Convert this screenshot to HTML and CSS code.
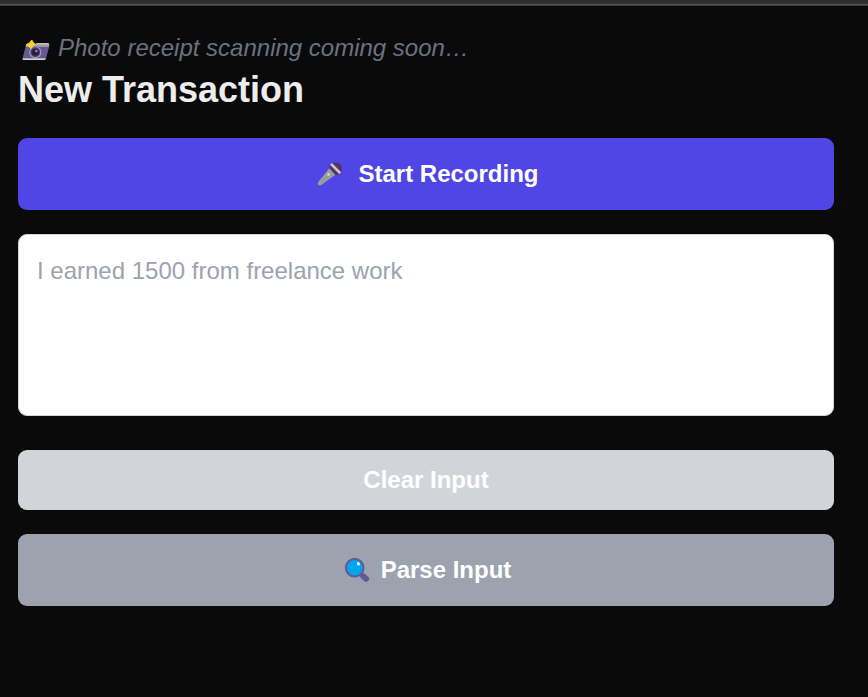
FILE: index.html
```html
<!DOCTYPE html>
<html lang="en">
<head>
<meta charset="utf-8">
<title>New Transaction</title>
<link rel="stylesheet" href="styles.css">
</head>
<body>
<div class="topbar"></div>
<main class="page">
  <p class="notice">
    <svg class="camera" viewBox="0 0 28 22" aria-hidden="true">
      <path d="M4 5h22q1.500 0 1.200 1.500L24 18.500H.5z" fill="#635994"/>
      <path d="M5 4.500h7l3-1.500h10.500q2 0 1.800 2L26.800 7H17q-4-1.500-7 0H3.500z" fill="#9b9b9b"/>
      <path d="M14 4l2-1h9.500q1.600 0 1.600 1.800H14z" fill="#bebebe"/>
      <path d="M.6 18.200h23.500q-.3 1.800-1.800 1.800H1.500Q0 20 .6 18.200z" fill="#d3d3d3"/>
      <circle cx="13.300" cy="12.200" r="6" fill="#aaa3b4"/>
      <circle cx="13.300" cy="12.200" r="4.900" fill="#433b6b"/>
      <circle cx="13.300" cy="12.200" r="3.300" fill="#261d35"/>
      <circle cx="14.300" cy="11" r="1.200" fill="#998ea4"/>
      <path d="M9.800 0q.6 2.300 3.700 4.500Q9.500 6.200 8.800 8.500 7.500 6.300 4 4.800 8.200 3.500 9.800 0z" fill="#ffce31" stroke="#ffce31" stroke-linejoin="round"/>
    </svg>
    <span>Photo receipt scanning coming soon…</span>
  </p>
  <h1 class="title">New Transaction</h1>
  <button class="button record">
    <svg class="mic" viewBox="0 0 26 24" aria-hidden="true">
      <path d="M13 5.500L19.500 12 5 22.400Q2.500 24 1.300 22.700t.3-3.200z" fill="#9b9b9b"/>
      <path d="M12.500 3.500q3-3.500 7.500-3 5 1 5 6 0 4-3.500 6.500L18.500 13 12 6z" fill="#533566"/>
      <path d="M13 2.800l1.900-1.900 9.300 9.400-1.800 2z" fill="#cdc4d6"/>
      <circle cx="11.500" cy="12.500" r="1.400" fill="#d3d3d3"/>
    </svg>
    <span>Start Recording</span>
  </button>
  <textarea class="entry" placeholder="I earned 1500 from freelance work"></textarea>
  <button class="button clear">Clear Input</button>
  <button class="button parse">
    <svg class="lens" viewBox="0 0 25 25" aria-hidden="true">
      <path d="M15.500 15.500l2 2" stroke="#635994" stroke-width="2.500"/>
      <path d="M18 18l3.200 2.900" stroke="#635994" stroke-width="5.800" stroke-linecap="round"/>
      <circle cx="9.700" cy="9.700" r="8.800" fill="#00a6ed" stroke="#635994" stroke-width="2"/>
      <path d="M12 4.200l2 .1 1.200 1.800-1 1.500-2-.7z" fill="#fff"/>
    </svg>
    <span>Parse Input</span>
  </button>
</main>
</body>
</html>
```
FILE: styles.css
```css
* {
  box-sizing: border-box;
}

body {
  margin: 0;
  min-height: 697px;
  background: #0a0a0a;
  color: #ededed;
  font-family: "Liberation Sans", Arial, sans-serif;
  font-size: 24px;
}

.topbar {
  height: 6px;
  background: #2f2f2f;
  border-bottom: 1px solid #3c3c3c;
  box-shadow: inset 0 -1px #555;
}

.page {
  display: flex;
  flex-direction: column;
  width: 834px;
  padding: 24px 0 0 18px;
}

.notice {
  display: flex;
  align-items: center;
  gap: 8px;
  height: 36px;
  margin: 0;
  padding-left: 4px;
  color: #6b7280;
  font-style: italic;
  line-height: 36px;
}

.camera {
  width: 28px;
  height: 22px;
  margin-top: 5px;
}

.title {
  margin: 0 0 24px;
  font-size: 36px;
  font-weight: 700;
  line-height: 48px;
}

.button {
  display: flex;
  align-items: center;
  justify-content: center;
  height: 72px;
  margin: 0;
  padding: 0;
  border: 0;
  border-radius: 9px;
  color: #fff;
  font: 700 24px/36px "Liberation Sans", Arial, sans-serif;
}

.record {
  gap: 15px;
  padding-left: 4px;
  background: #4f46e5;
}

.mic {
  width: 26px;
  height: 24px;
}

.entry {
  height: 182px;
  margin: 24px 0 34px;
  padding: 18px;
  border: 1px solid #d1d5db;
  border-radius: 9px;
  background: #fff;
  font: 24px/36px "Liberation Sans", Arial, sans-serif;
  resize: none;
}

.entry::placeholder {
  color: #9ca3af;
}

.clear {
  height: 60px;
  margin-bottom: 24px;
  background: #d1d5db;
}

.parse {
  gap: 11px;
  padding-left: 4px;
  background: #9ca3af;
}

.lens {
  width: 25px;
  height: 25px;
}
```
